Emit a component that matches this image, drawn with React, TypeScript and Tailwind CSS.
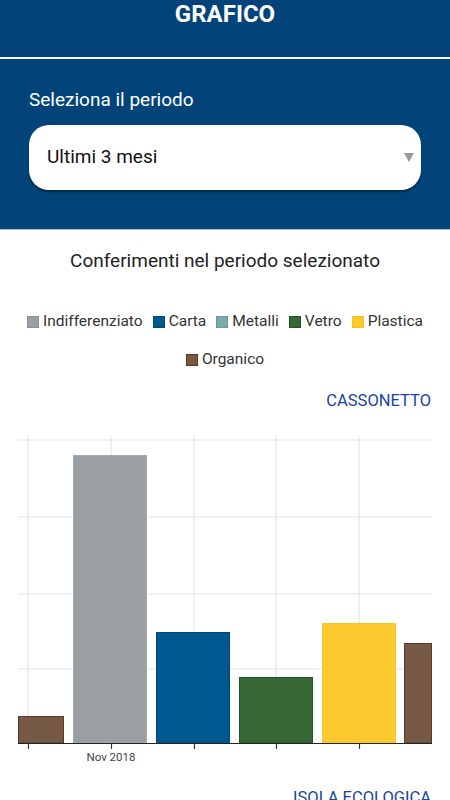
import React from "react";

const legend = [
  { label: "Indifferenziato", fill: "#9a9fa3", stroke: "#8a8f93" },
  { label: "Carta", fill: "#00598e", stroke: "#004a7a" },
  { label: "Metalli", fill: "#78aaa8", stroke: "#6a9a98" },
  { label: "Vetro", fill: "#376835", stroke: "#1f5a1d" },
  { label: "Plastica", fill: "#fbca2f", stroke: "#f5c21f" },
  { label: "Organico", fill: "#765947", stroke: "#5a3a20" },
];

function Chart() {
  const oy = 430;
  const base = 742 - oy;
  const vx = [28, 111, 194, 276, 359];
  const hy = [439, 516, 593, 668].map((y) => y - oy);
  const bars = [
    { x: 18, w: 46, top: 715, fill: "#765947", stroke: "#5a3a20" },
    { x: 73, w: 74, top: 454, fill: "#9a9fa3", stroke: "#a6aaad" },
    { x: 156, w: 74, top: 631, fill: "#00598e", stroke: "#004a7a" },
    { x: 239, w: 74, top: 676, fill: "#376835", stroke: "#1f5a1d" },
    { x: 322, w: 74, top: 622, fill: "#fbca2f", stroke: "#f8c62a" },
    { x: 404, w: 28, top: 642, fill: "#765947", stroke: "#5a3a20" },
  ];
  return (
    <svg width="450" height="340" viewBox="0 0 450 340" className="block">
      {hy.map((y, i) => (
        <line key={"h" + i} x1="18" x2="432" y1={y} y2={y} stroke="#e3e3e3" strokeWidth="1.2" />
      ))}
      {vx.map((x, i) => (
        <line key={"v" + i} x1={x} x2={x} y1={5} y2={base} stroke="#e0e0e0" strokeWidth="1" />
      ))}
      {bars.map((b, i) => (
        <rect
          key={"b" + i}
          x={b.x + 0.5}
          y={b.top - oy + 0.5}
          width={b.w - 1}
          height={base - (b.top - oy) - 0.5}
          fill={b.fill}
          stroke={b.stroke}
          strokeWidth="1"
        />
      ))}
      <line x1="18" x2="432" y1={base + 0.5} y2={base + 0.5} stroke="#222" strokeWidth="1.2" />
      {vx.map((x, i) => (
        <line key={"t" + i} x1={x + 0.5} x2={x + 0.5} y1={base} y2={base + 6} stroke="#333" strokeWidth="1.2" />
      ))}
      <text
        x="111"
        y={756 - oy + 4}
        textAnchor="middle"
        fontSize="11.5"
        fill="#444"
        fontFamily="Roboto, 'Liberation Sans', sans-serif"
      >
        Nov 2018
      </text>
    </svg>
  );
}

export default function App() {
  return (
    <div className="w-[450px] h-[800px] overflow-hidden bg-white flex flex-col" style={{ fontFamily: "Roboto, 'Liberation Sans', sans-serif" }}>
      <div className="shrink-0 h-[57px] bg-[#02447a] flex justify-center">
        <div className="text-white font-bold text-[24px] leading-[28px]">GRAFICO</div>
      </div>
      <div className="shrink-0 h-[2px] bg-white" />
      <div className="shrink-0 h-[171px] bg-[#02447a] border-b border-[#b9c3cc] px-[29px] pt-[29px] flex flex-col">
        <div className="text-white text-[19px] leading-[24px]">Seleziona il periodo</div>
        <div className="shrink-0 mt-[13px] h-[65px] bg-white rounded-[20px] shadow-[0_2px_2px_rgba(0,0,0,0.45)] flex items-center pl-[18px] pr-[7px]">
          <div className="flex-1 text-[19px] text-[#111]">Ultimi 3 mesi</div>
          <svg width="10" height="9" viewBox="0 0 10 9">
            <path d="M0 0 L10 0 L5 9 Z" fill="#999" />
          </svg>
        </div>
      </div>
      <div className="shrink-0 mt-[19px] text-center text-[19px] leading-[24px] text-[#222]">
        Conferimenti nel periodo selezionato
      </div>
      <div className="shrink-0 mt-[30px] flex flex-wrap justify-center gap-x-[10px] px-[20px]">
        {legend.map((l) => (
          <div key={l.label} className="h-[38px] flex items-center gap-[4px]">
            <div className="w-[12px] h-[12px] border" style={{ background: l.fill, borderColor: l.stroke }} />
            <span className="text-[15.5px] text-[#333]">{l.label}</span>
          </div>
        ))}
      </div>
      <div className="shrink-0 mt-[10px] h-[24px] flex items-center justify-end pr-[19px] text-[16.5px] text-[#1a45a0]">
        CASSONETTO
      </div>
      <div className="shrink-0 mt-[18px]">
        <Chart />
      </div>
      <div className="shrink-0 mt-[15px] h-[24px] flex items-center justify-end pr-[19px] text-[16.5px] text-[#1a45a0]">
        ISOLA ECOLOGICA
      </div>
    </div>
  );
}
